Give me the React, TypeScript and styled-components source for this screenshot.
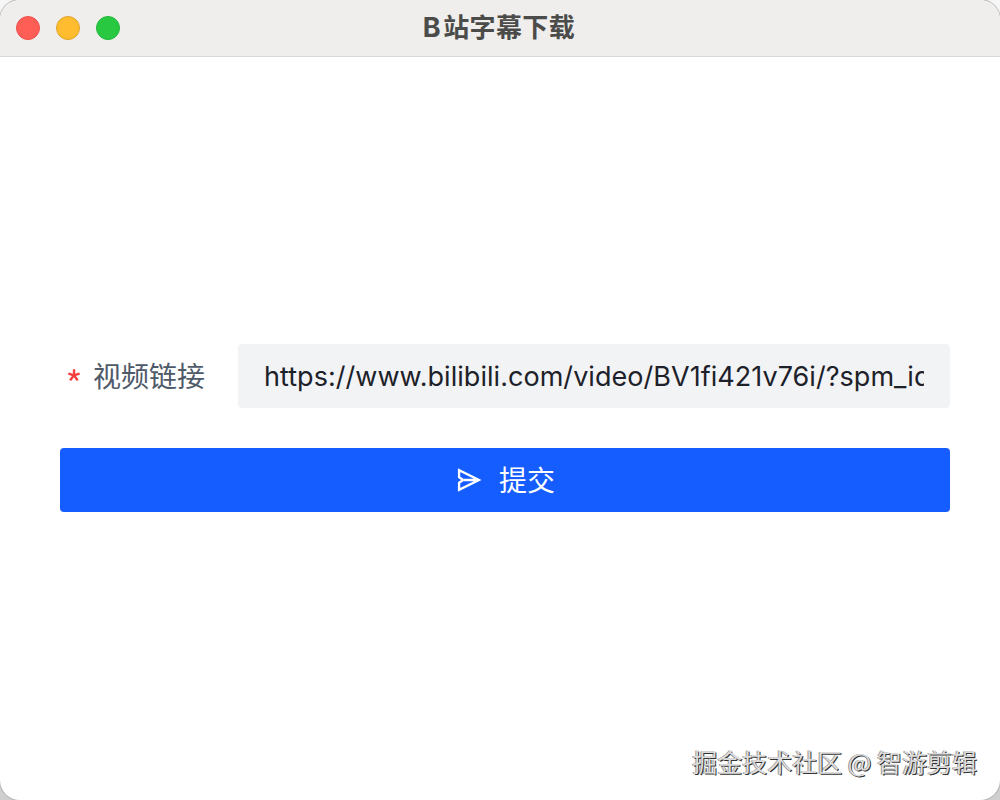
import styled, { createGlobalStyle } from "styled-components";

const VIDEO_URL =
  "https://www.bilibili.com/video/BV1fi421v76i/?spm_id_from=333.999.0.0";

const App = () => {
  return (
    <>
      <GlobalStyle />
      <Window>
        <TitleBar>
          <Lights>
            <Light $color="#ff5e57" $border="#ee5049" />
            <Light $color="#febc2e" $border="#dfa32a" />
            <Light $color="#28c840" $border="#22b838" />
          </Lights>
          <Title>
            <Latin>B</Latin>站字幕下载
          </Title>
        </TitleBar>
        <Form onSubmit={(e) => e.preventDefault()}>
          <Field>
            <Label htmlFor="url">
              <Required viewBox="0 0 1024 1024">
                <path d="M583.338667 17.066667c18.773333 0 34.133333 15.36 34.133333 34.133333v349.013333l313.344-101.888a34.133333 34.133333 0 0 1 43.008 22.016l42.154667 129.706667a34.133333 34.133333 0 0 1-21.845334 43.178667l-315.733333 102.4 208.896 287.744a34.133333 34.133333 0 0 1-7.509333 47.786666l-110.421334 80.213334a34.133333 34.133333 0 0 1-47.786666-7.509334L505.685333 706.218667 288.426667 1003.861333a34.133333 34.133333 0 0 1-47.786667 7.509334l-110.421333-80.213334a34.133333 34.133333 0 0 1-7.509334-47.786666l214.186667-295.253334L29.013333 489.813333a34.133333 34.133333 0 0 1-22.016-43.008l42.154667-129.877333a34.133333 34.133333 0 0 1 43.008-22.016l320.512 104.106667L412.672 51.2c0-18.773333 15.36-34.133333 34.133333-34.133333h136.533334z" />
              </Required>
              <LabelText>视频链接</LabelText>
            </Label>
            <InputBox>
              <Input id="url" defaultValue={VIDEO_URL} spellCheck={false} />
            </InputBox>
          </Field>
          <Submit type="submit">
            <SendIcon viewBox="0 0 48 48">
              <path d="m14 24-7-5V7l34 17L7 41V29l7-5Zm0 0h25" />
            </SendIcon>
            <SubmitText>提交</SubmitText>
          </Submit>
        </Form>
        <Watermark>掘金技术社区 @ 智游剪辑</Watermark>
      </Window>
    </>
  );
};

const GlobalStyle = createGlobalStyle`
  * {
    box-sizing: border-box;
  }
  body {
    margin: 0;
    overflow: hidden;
    background: linear-gradient(#f6f6f6, #cfcfcf);
    font-family: Inter, "Noto Sans CJK SC", sans-serif;
  }
`;

const Window = styled.div`
  position: relative;
  display: flex;
  flex-direction: column;
  width: 1000px;
  height: 800px;
  overflow: hidden;
  background: #fff;
  border-radius: 20px;
  box-shadow: 0 0 1px 1px #b4b4b4;
`;

const TitleBar = styled.header`
  display: grid;
  grid-template-columns: 1fr auto 1fr;
  align-items: center;
  height: 57px;
  padding: 0 16px;
  background: #efeeec;
  border-bottom: 1px solid #d8d8d6;
`;

const Lights = styled.div`
  display: flex;
  gap: 16px;
`;

const Light = styled.span<{ $color: string; $border: string }>`
  width: 24px;
  height: 24px;
  border-radius: 50%;
  background: ${(p) => p.$color};
  border: 1px solid ${(p) => p.$border};
`;

const Title = styled.h1`
  margin: 0 2px 0 0;
  color: #4b4b4a;
  font-size: 26px;
  font-weight: 700;
  line-height: 40px;
  letter-spacing: 0.4px;
`;

const Latin = styled.span`
  margin-right: 2px;
  font-size: 27px;
`;

const Form = styled.form`
  display: flex;
  flex-direction: column;
  gap: 40px;
  padding: 287px 50px 0 60px;
`;

const Field = styled.div`
  display: flex;
  height: 64px;
`;

const Label = styled.label`
  display: flex;
  align-items: center;
  width: 178px;
  padding-left: 8px;
  color: #4e5969;
  font-size: 28px;
`;

const LabelText = styled.span`
  padding-top: 2px;
  line-height: 64px;
`;

const Required = styled.svg`
  width: 12px;
  height: 12px;
  margin-right: 13px;
  margin-bottom: 2px;
  fill: #f53f3f;
`;

const InputBox = styled.div`
  flex: 1;
  display: flex;
  padding: 1px 26px 0;
  background: #f2f3f5;
  border-radius: 4px;
`;

const Input = styled.input`
  width: 100%;
  padding: 0;
  border: 0;
  outline: 0;
  background: none;
  color: #1d2129;
  font-family: Inter, sans-serif;
  font-size: 27px;
  letter-spacing: 0.04px;
`;

const Submit = styled.button`
  display: flex;
  align-items: center;
  justify-content: center;
  gap: 16px;
  height: 64px;
  padding: 0;
  border: 0;
  border-radius: 4px;
  background: #165dff;
  color: #fff;
  font-family: inherit;
  font-size: 28px;
`;

const SubmitText = styled.span`
  padding-bottom: 2px;
`;

const SendIcon = styled.svg`
  width: 28px;
  height: 28px;
  fill: none;
  stroke: #fff;
  stroke-width: 4;
`;

const Watermark = styled.div`
  position: absolute;
  right: 23px;
  bottom: 21px;
  color: #dcdcdc;
  font-family: "Noto Sans CJK SC", sans-serif;
  font-size: 25px;
  line-height: 36px;
  white-space: nowrap;
  text-shadow: 1px 1px 0 #333, -1px 0 0 #999;
`;

export default App;
